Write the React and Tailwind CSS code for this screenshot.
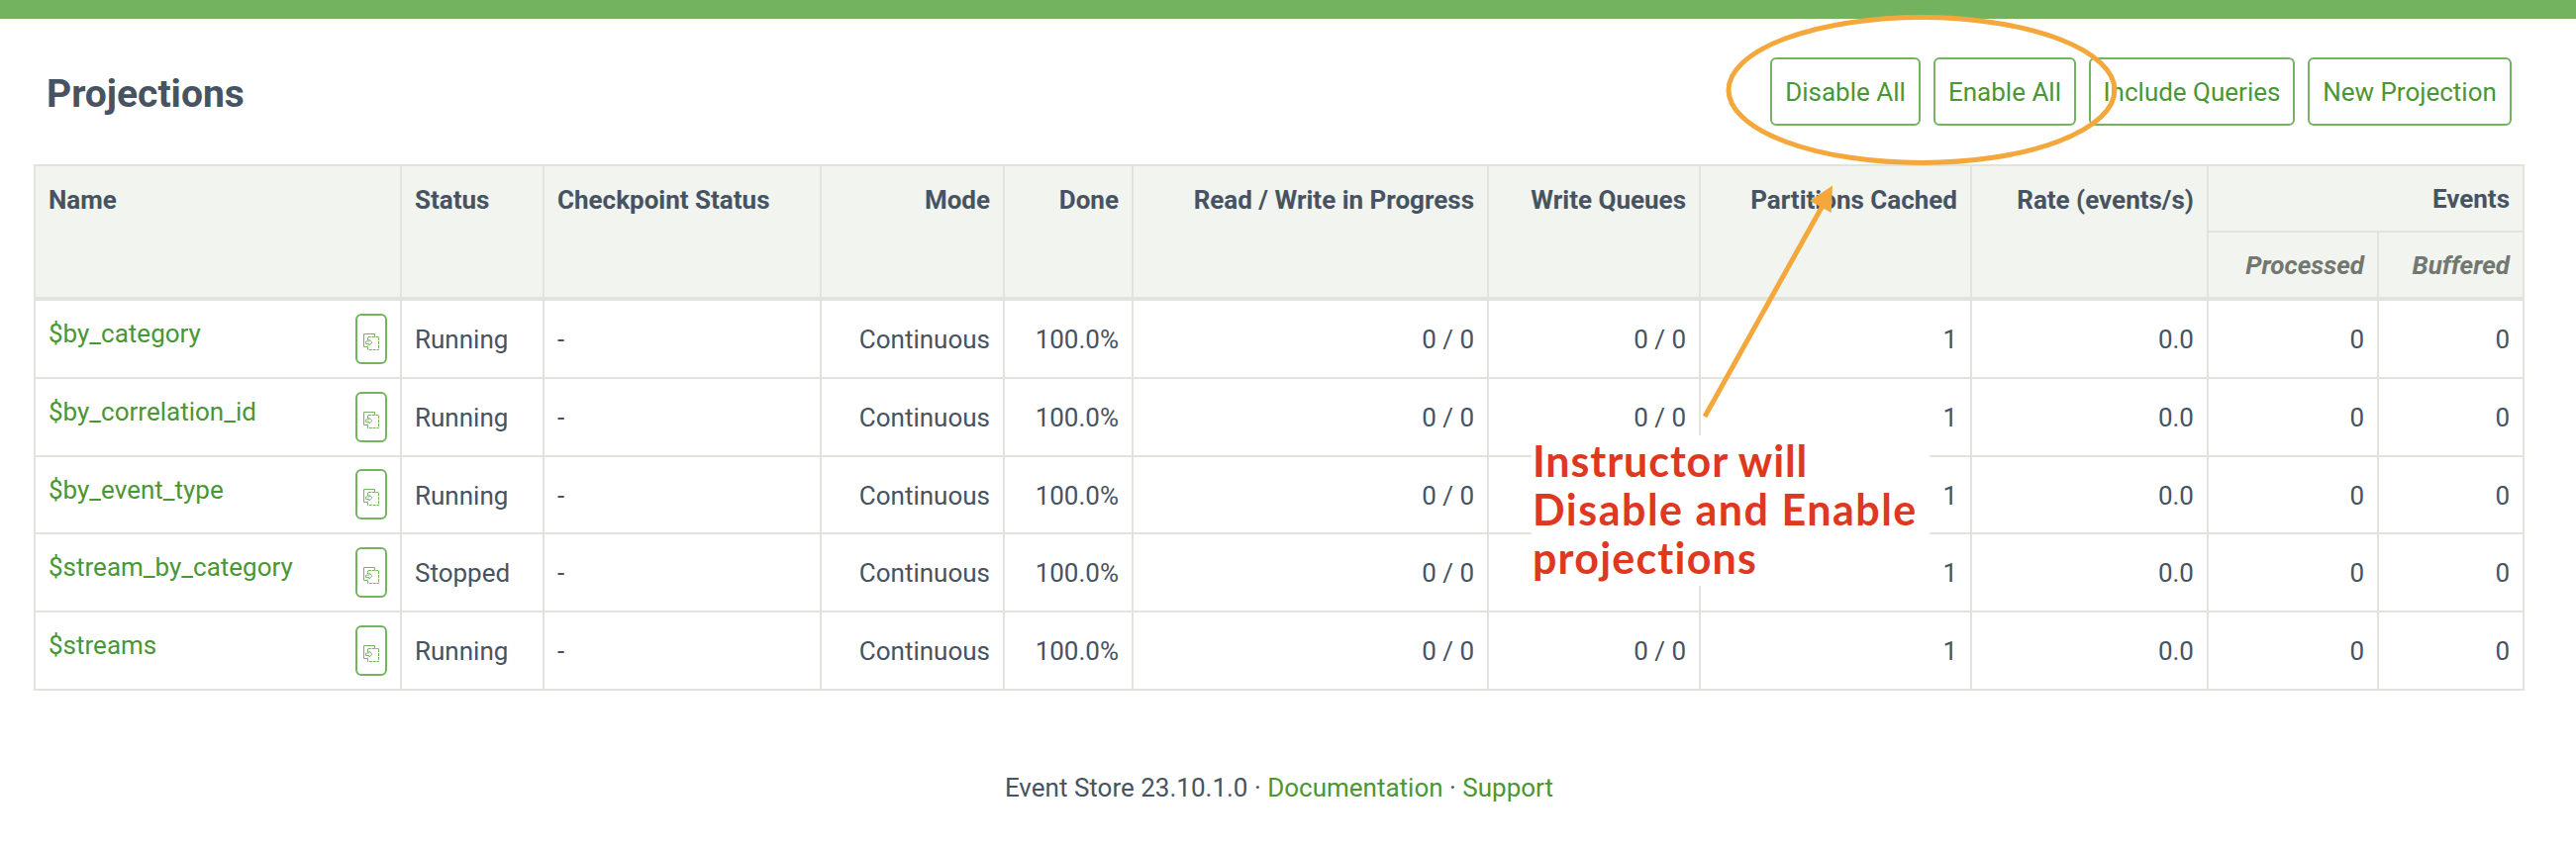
const rows = [
  ["$by_category", "Running", "h-[79px]"],
  ["$by_correlation_id", "Running", "h-[79px]"],
  ["$by_event_type", "Running", "h-[78px]"],
  ["$stream_by_category", "Stopped", "h-[79px]"],
  ["$streams", "Running", "h-[79px]"],
];

const columns = ["w-[370px]", "w-[144px]", "w-[280px]", "w-[185px]", "w-[130px]", "w-[359px]", "w-[214px]", "w-[274px]", "w-[239px]", "w-[172px]", "w-[147px]"];

function CopyIcon() {
  return (
    <svg className="block h-[18px] w-[16px]" viewBox="0 0 16 18" fill="none" stroke="#74b35f" strokeWidth="1">
      <path d="M11.500 3.500V.500H.500V13.500H4.500" />
      <path d="M4.500 7V3.500H15.500V16.500H4.500V12.500" strokeDasharray="3 0.8" />
      <path d="M2.500 8H6V6.200L9 9.200L6 12V10.500H2.500Z" strokeWidth="0.9" />
    </svg>
  );
}

function Button({ children, className }) {
  return (
    <button className={`h-[69px] rounded-[6px] border-2 border-[#74b35f] text-[#4b9634] ${className}`}>{children}</button>
  );
}

function Head({ children, className = "" }) {
  return (
    <th rowSpan={2} className={`border-r-2 border-b-4 border-[#e1e4dd] px-[13px] pt-[17px] align-top ${className}`}>{children}</th>
  );
}

function Cell({ children, className = "" }) {
  return <td className={`border-r-2 border-b-2 border-[#e1e4dd] px-[13px] py-0 pt-[1px] ${className}`}>{children}</td>;
}

export default function App() {
  return (
    <div className="relative h-[858px] w-[2602px] overflow-hidden bg-white font-['Roboto',sans-serif] text-[26px] leading-[34px] text-[#475361]">
      <div className="h-[19px] bg-[#73b360]" />
      <header className="flex h-[147px] items-center justify-between pr-[65px] pl-[47px]">
        <h1 className="pt-[5px] text-[39px] font-bold">Projections</h1>
        <div className="flex gap-[13px]">
          <Button className="w-[152px]">Disable All</Button>
          <Button className="w-[144px]">Enable All</Button>
          <Button className="w-[208px]">Include Queries</Button>
          <Button className="w-[206px]">New Projection</Button>
        </div>
      </header>
      <table className="ml-[34px] w-[2516px] table-fixed border-separate border-spacing-0 border-t-2 border-l-2 border-[#e1e4dd]">
        <colgroup>
          {columns.map((c, i) => <col key={i} className={c} />)}
        </colgroup>
        <thead className="bg-[#f1f4ef] text-right font-bold">
          <tr className="h-[67px]">
            <Head className="text-left">Name</Head>
            <Head className="text-left">Status</Head>
            <Head className="text-left">Checkpoint Status</Head>
            <Head>Mode</Head>
            <Head>Done</Head>
            <Head>Read / Write in Progress</Head>
            <Head>Write Queues</Head>
            <Head>Partitions Cached</Head>
            <Head>Rate (events/s)</Head>
            <th colSpan={2} className="border-r-2 border-b-2 border-[#e1e4dd] px-[13px]">Events</th>
          </tr>
          <tr className="h-[69px] text-[#727771] italic">
            <th className="border-r-2 border-b-4 border-[#e1e4dd] px-[13px]">Processed</th>
            <th className="border-r-2 border-b-4 border-[#e1e4dd] px-[13px]">Buffered</th>
          </tr>
        </thead>
        <tbody className="text-right">
          {rows.map(([name, status, height]) => (
            <tr key={name} className={height}>
              <Cell className="text-left">
                <div className="flex items-center justify-between">
                  <a className="-mt-3 text-[#4b9634]">{name}</a>
                  <span className="-mt-px mb-px flex h-[51px] w-[32px] items-center justify-center rounded-[6px] border-2 border-[#74b35f] pt-[7px]"><CopyIcon /></span>
                </div>
              </Cell>
              <Cell className="text-left">{status}</Cell>
              <Cell className="text-left">-</Cell>
              <Cell>Continuous</Cell>
              <Cell>100.0%</Cell>
              <Cell>0 / 0</Cell>
              <Cell>0 / 0</Cell>
              <Cell>1</Cell>
              <Cell>0.0</Cell>
              <Cell>0</Cell>
              <Cell>0</Cell>
            </tr>
          ))}
        </tbody>
      </table>
      <footer className="mt-[81px] pr-[18px] text-center">
        <span>Event Store 23.10.1.0 · </span>
        <a className="text-[#4b9634]">Documentation</a>
        <span> · </span>
        <a className="text-[#4b9634]">Support</a>
      </footer>
      <svg className="absolute top-0 left-0 h-[858px] w-[2602px]" viewBox="0 0 2602 858" fill="none" stroke="#f4a73b">
        <ellipse cx="1941" cy="91" rx="195" ry="73.5" strokeWidth="5" />
        <path d="M1722 421L1842 206" strokeWidth="5" />
        <path d="M1851 187.500L1849.700 215L1828 203Z" fill="#f4a73b" stroke="none" />
      </svg>
      <div className="absolute top-[440px] left-[1547px] h-[152px] w-[402px] bg-white pt-[1px] pl-[1px] font-['Lato',sans-serif] text-[43px] leading-[49px] font-bold whitespace-nowrap text-[#de3821] [font-variant-ligatures:none]">
        <div className="tracking-[0.9px]">Instructor will</div>
        <div className="tracking-[1.5px]">Disable and Enable</div>
        <div className="tracking-[1.2px]">projections</div>
      </div>
    </div>
  );
}
